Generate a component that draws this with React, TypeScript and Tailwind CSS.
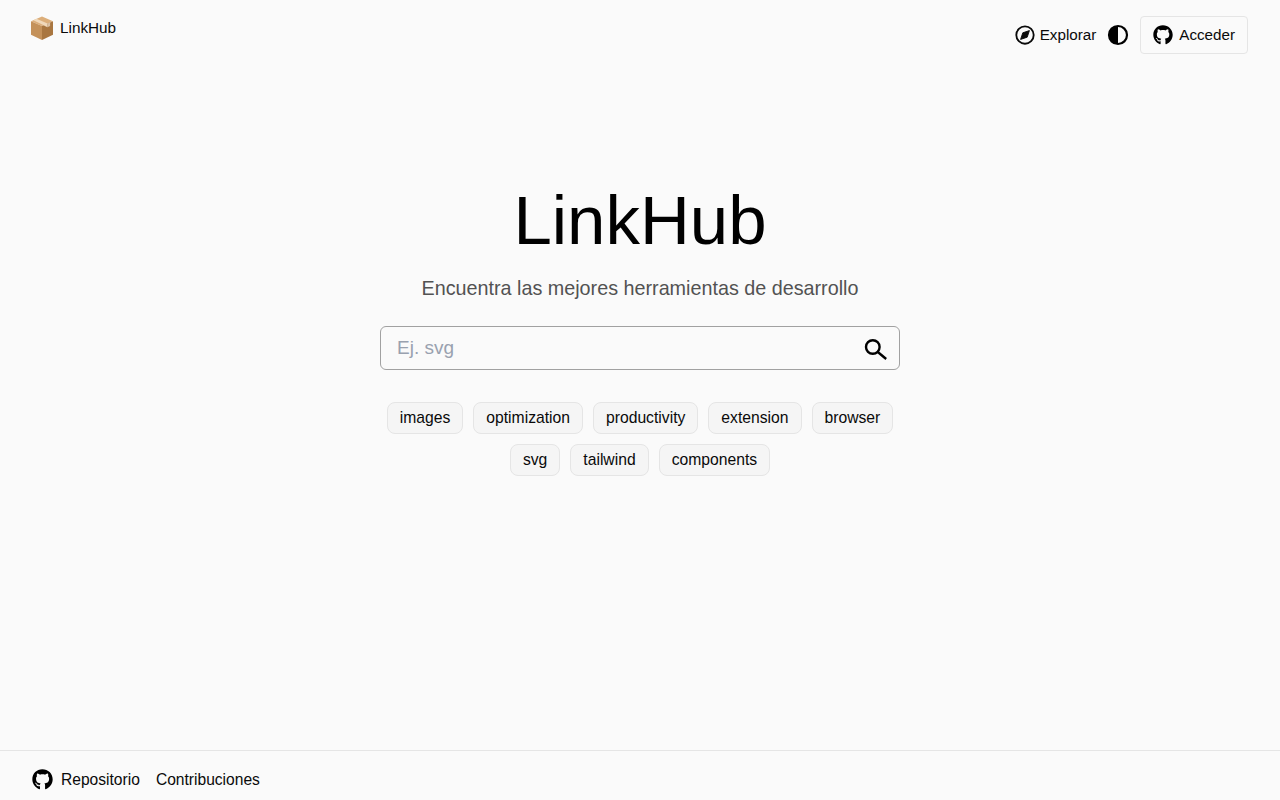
import { FaGithub } from "react-icons/fa";

const tagRows = [
  ["images", "optimization", "productivity", "extension", "browser"],
  ["svg", "tailwind", "components"],
];

function CompassIcon() {
  return (
    <svg viewBox="0 0 24 24" className="h-[22px] w-[22px]" fill="none" stroke="currentColor" strokeWidth="2" strokeLinejoin="round">
      <circle cx="12" cy="12" r="9.5" />
      <path d="M16.8 7.2l-2.4 7.2-7.2 2.4 2.4-7.2z" fill="currentColor" strokeWidth="1" />
    </svg>
  );
}

function ContrastIcon() {
  return (
    <svg viewBox="0 0 24 24" className="h-6 w-6" fill="none">
      <circle cx="12" cy="12" r="9" stroke="currentColor" strokeWidth="2.2" />
      <path d="M12 3a9 9 0 0 0 0 18z" fill="currentColor" />
    </svg>
  );
}

function SearchIcon() {
  return (
    <svg viewBox="0 0 24 24" className="h-6 w-6" fill="none" stroke="currentColor" strokeWidth="2.4">
      <circle cx="8.8" cy="10" r="6.8" />
      <path d="M13.8 15l8.4 7" />
    </svg>
  );
}

function BoxEmoji() {
  return (
    <svg viewBox="0 0 24 24" className="h-6 w-6 shrink-0">
      <path d="M12 .5l11 4.7L12 10 1 5.2z" fill="#dcae7a" />
      <path d="M1 5.2L12 10v14L1 18.8z" fill="#c4915a" />
      <path d="M23 5.2L12 10v14l11-5.2z" fill="#a97640" />
      <path d="M6.5 2.8l11 4.8v3.6l-3.2-1.4V9.6L3.4 4.2z" fill="#f0d8ba" />
      <path d="M17.5 7.6l2.6-1.1v3.5l-2.6 1.2z" fill="#d9c0a4" />
    </svg>
  );
}

export default function App() {
  return (
    <div className="flex min-h-screen flex-col bg-[#fafafa] text-[#0a0a0a] font-['Liberation_Sans',sans-serif]">
      <header className="flex items-start justify-between pl-[30px] pr-8 pt-4">
        <a className="flex h-6 items-center gap-1.5 text-[15.3px]">
          <BoxEmoji />
          <span>LinkHub</span>
        </a>
        <nav className="flex items-center gap-2.5 text-[15.2px]">
          <a className="flex items-center gap-1">
            <CompassIcon />
            <span>Explorar</span>
          </a>
          <button className="text-black">
            <ContrastIcon />
          </button>
          <a className="flex h-[38px] items-center gap-1.5 rounded border border-neutral-200 px-3">
            <FaGithub className="h-5 w-5 text-black" />
            <span>Acceder</span>
          </a>
        </nav>
      </header>

      <main className="flex flex-1 flex-col items-center pt-[132px]">
        <h1 className="text-[69px] leading-none text-black">LinkHub</h1>
        <p className="mt-[19px] text-[19.75px] leading-7 text-neutral-600">Encuentra las mejores herramientas de desarrollo</p>
        <div className="relative mt-6 w-[520px]">
          <input
            placeholder="Ej. svg"
            className="h-11 w-full rounded-md border border-neutral-400 bg-transparent px-4 text-[19px] placeholder:text-gray-400"
          />
          <div className="absolute right-3 top-[11px] text-black">
            <SearchIcon />
          </div>
        </div>
        <div className="mt-8 flex flex-col gap-2.5">
          {tagRows.map((row) => (
            <div key={row[0]} className="flex justify-center gap-2.5">
              {row.map((tag) => (
                <a key={tag} className="flex h-8 items-center rounded-lg border border-neutral-200 bg-neutral-100 px-3 text-[15.7px]">
                  {tag}
                </a>
              ))}
            </div>
          ))}
        </div>
      </main>

      <footer className="flex h-[50px] items-center gap-4 border-t border-neutral-200 px-8 pt-2 text-[15.6px]">
        <a className="flex items-center gap-2">
          <FaGithub className="h-[21px] w-[21px] text-black" />
          <span>Repositorio</span>
        </a>
        <a>Contribuciones</a>
      </footer>
    </div>
  );
}
